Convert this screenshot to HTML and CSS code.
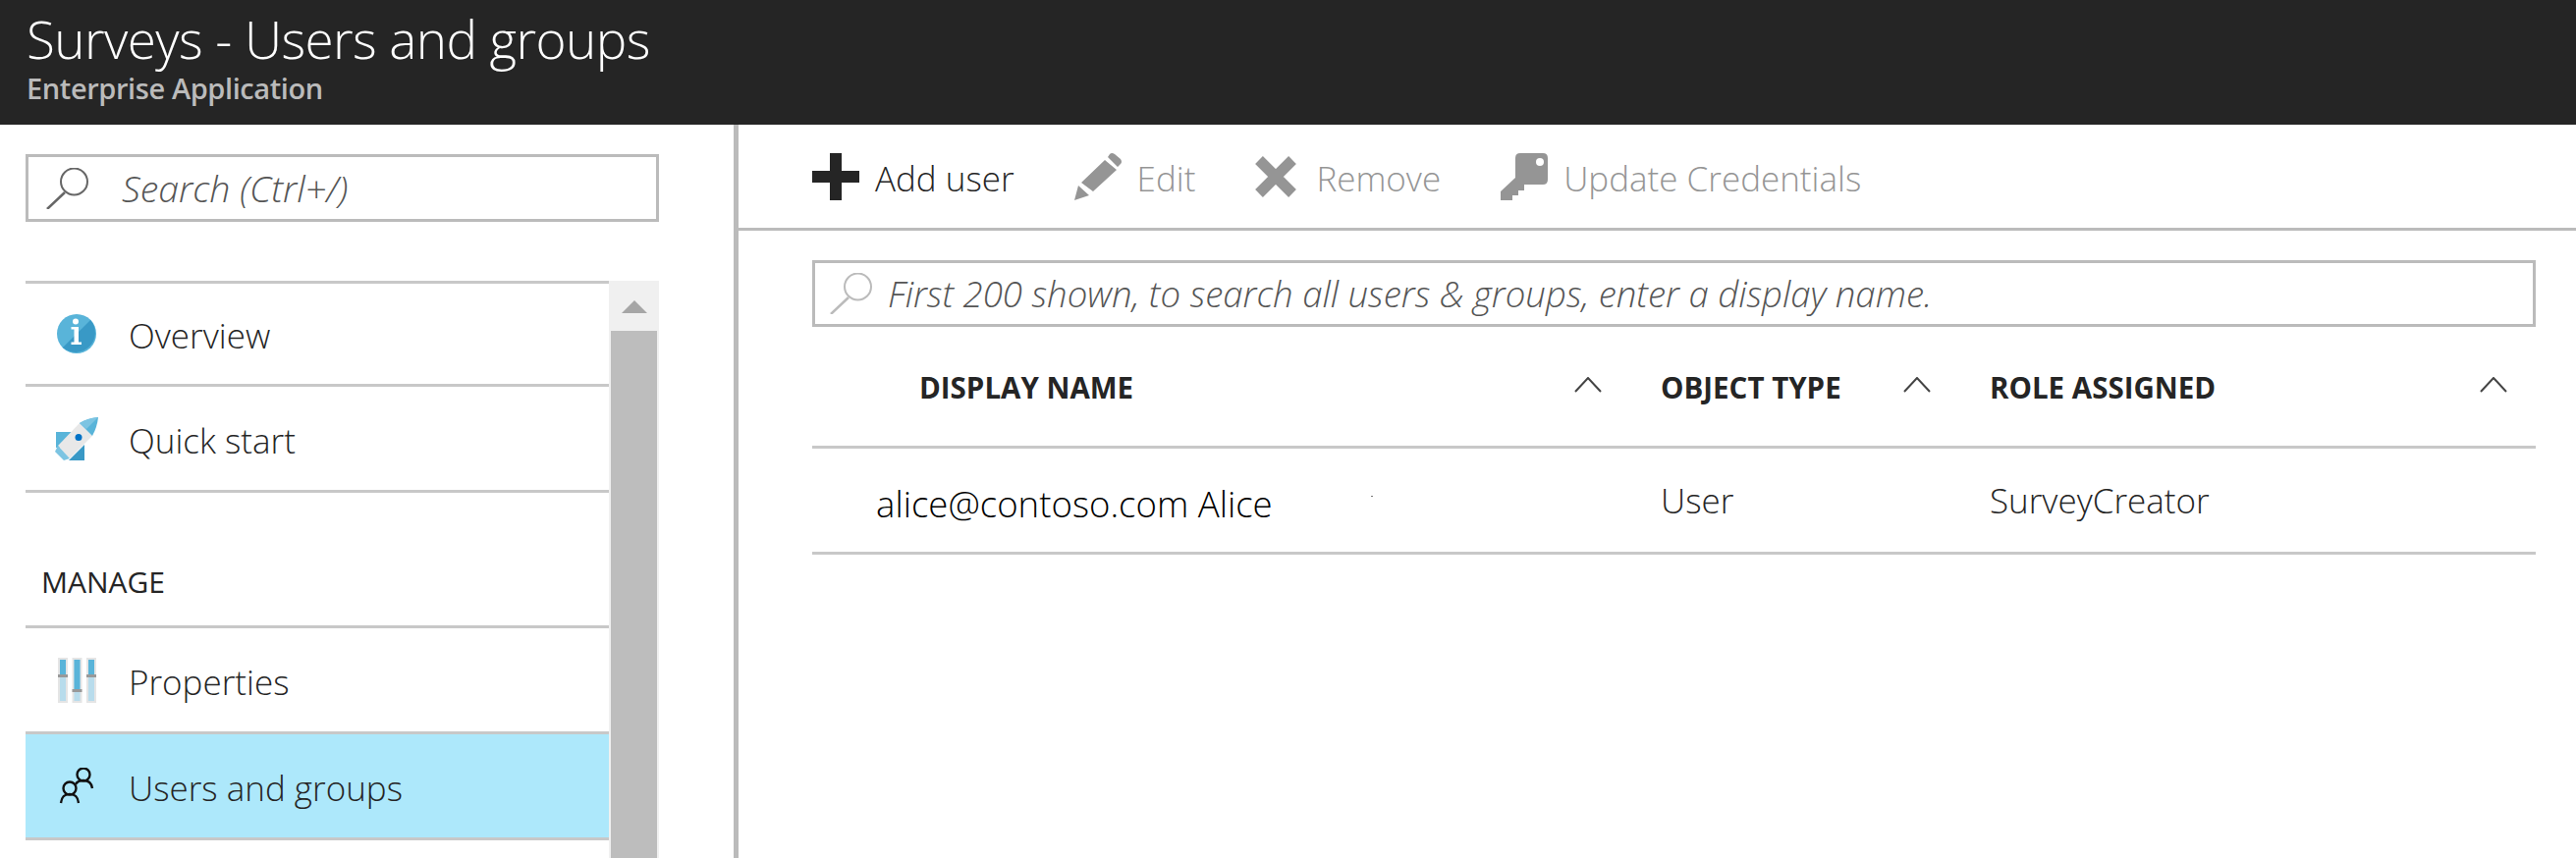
FILE: index.html
```html
<!DOCTYPE html>
<html lang="en">
<head>
  <meta charset="UTF-8" />
  <title>Surveys - Users and groups</title>
  <link rel="stylesheet" href="styles.css">
</head>
<body>

  <header class="blade-header">
    <h1>Surveys - Users and groups</h1>
    <p>Enterprise Application</p>
  </header>

  <div class="blade">
    <aside class="sidebar">
      <div class="side-search">
        <svg class="side-search-icon" width="43" height="42" viewBox="0 0 43 42"><circle cx="28.500" cy="14" r="13.500" fill="none" stroke="#666" stroke-width="2"/><path d="M19 25 L1 42" fill="none" stroke="#666" stroke-width="2.500"/></svg>
        <span>Search (Ctrl+/)</span>
      </div>

      <div class="side-body">
        <nav class="menu">
          <a class="menu-item">
            <svg class="menu-icon" width="44" height="44" viewBox="0 0 44 44"><circle cx="22" cy="22" r="20" fill="#59b4d9"/><path d="M36.100 7.900 A20 20 0 0 1 7.900 36.100 Z" fill="#3999c6"/><circle cx="21" cy="9.500" r="3" fill="#fff"/><path d="M16.500 15 H24 V30.500 H27 V33 H16.500 V30.500 H19.500 V17.500 H16.500 Z" fill="#fff"/></svg>
            <span>Overview</span>
          </a>
          <a class="menu-item">
            <svg class="menu-icon" width="44" height="44" viewBox="0 0 44 44"><path d="M1 15 H20 L16 30 L1 31 Z" fill="#59b4d9"/><path d="M30 28 V44 H14 Z" fill="#3999c6"/><path d="M25 6 L38 19 L15 42 L3 29 Z" fill="#e8e8e8"/><path d="M25 6 Q33 1 44 0 Q43 10 38 19 Z" fill="#59b4d9"/><path d="M25 6 Q33 1 44 0 L32 12 Z" fill="#7cc4e2"/><path d="M3 29 L0 35 L9 44 L15 42 Z" fill="#7cc4e2"/><circle cx="24" cy="20.500" r="3.500" fill="#0072c6"/></svg>
            <span>Quick start</span>
          </a>
          <div class="menu-heading">MANAGE</div>
          <a class="menu-item">
            <svg class="menu-icon" width="44" height="46" viewBox="0 0 44 46"><g fill="#e5e5e5"><rect x="3" y="0" width="10" height="46"/><rect x="17.500" y="0" width="10" height="46"/><rect x="32" y="0" width="10" height="46"/></g><g fill="#b8dcec"><rect x="5" y="2" width="6" height="42"/><rect x="19.500" y="2" width="6" height="42"/><rect x="34" y="2" width="6" height="42"/></g><g fill="#59b4d9"><rect x="5" y="2" width="6" height="15"/><rect x="19.500" y="2" width="6" height="30"/><rect x="34" y="2" width="6" height="15"/></g><g fill="#999"><rect x="3" y="17" width="10" height="3"/><rect x="17.500" y="32" width="10" height="3"/><rect x="32" y="17" width="10" height="3"/></g></svg>
            <span>Properties</span>
          </a>
          <a class="menu-item active">
            <svg class="menu-icon" width="44" height="38" viewBox="0 0 44 38"><g fill="none" stroke="#111" stroke-width="2.400"><circle cx="15" cy="21" r="6.500"/><path d="M6 36 C7 28 11 27 15 27 C19 27 23 28 24 36"/><circle cx="29" cy="7" r="6.500"/><path d="M21 17 C23 13 26 13 29 13 C33 13 37 14 38 21"/></g></svg>
            <span>Users and groups</span>
          </a>
        </nav>
        <div class="scrollbar">
          <div class="scroll-up"><span class="scroll-arrow"></span></div>
          <div class="scroll-thumb"></div>
        </div>
      </div>
    </aside>

    <main class="content">
      <div class="toolbar">
        <a class="tool">
          <svg width="48" height="48" viewBox="0 0 48 48"><path d="M18 0 H30 V18 H48 V30 H30 V48 H18 V30 H0 V18 H18 Z" fill="#252525"/></svg>
          <span>Add user</span>
        </a>
        <a class="tool disabled">
          <svg width="48" height="48" viewBox="0 0 48 48"><path d="M0 48 L4 33 L15 43 Z M7 30 L31 7 L43 17 L19 39 Z M34 4 L36 1 Q38 -1 41 1 L47 6 Q49 9 47 11 L44 14 Z" fill="#959595"/></svg>
          <span>Edit</span>
        </a>
        <a class="tool tool-remove disabled">
          <svg width="42" height="42" viewBox="0 0 42 42"><path d="M4 4 L38 38 M38 4 L4 38" fill="none" stroke="#959595" stroke-width="11"/></svg>
          <span>Remove</span>
        </a>
        <a class="tool disabled">
          <svg width="48" height="48" viewBox="0 0 48 48"><path d="M20 0 H43 Q48 0 48 5 V27 Q48 32 43 32 H24 V38 H18 V43 H12 V48 H0 V39 L15 25 V5 Q15 0 20 0 Z" fill="#959595"/><circle cx="40" cy="9" r="4" fill="#fff"/></svg>
          <span>Update Credentials</span>
        </a>
      </div>

      <div class="filter">
        <svg width="43" height="42" viewBox="0 0 43 42"><circle cx="28.500" cy="14" r="13.500" fill="none" stroke="#bbb" stroke-width="2"/><path d="M19 25 L1 42" fill="none" stroke="#bbb" stroke-width="2.500"/></svg>
        <span>First 200 shown, to search all users &amp; groups, enter a display name.</span>
      </div>

      <table class="users">
        <thead>
          <tr>
            <th class="col-name"><div class="th-inner"><span>DISPLAY NAME</span><svg class="sort" width="28" height="16" viewBox="0 0 28 16"><path d="M1 15 L14 1 L27 15" fill="none" stroke="#444" stroke-width="2"/></svg></div></th>
            <th class="col-type"><div class="th-inner"><span>OBJECT TYPE</span><svg class="sort" width="28" height="16" viewBox="0 0 28 16"><path d="M1 15 L14 1 L27 15" fill="none" stroke="#444" stroke-width="2"/></svg></div></th>
            <th class="col-role"><div class="th-inner"><span>ROLE ASSIGNED</span><svg class="sort" width="28" height="16" viewBox="0 0 28 16"><path d="M1 15 L14 1 L27 15" fill="none" stroke="#444" stroke-width="2"/></svg></div></th>
          </tr>
        </thead>
        <tbody>
          <tr>
            <td class="cell-user">alice@contoso.com Alice<span class="speck"></span></td>
            <td>User</td>
            <td>SurveyCreator</td>
          </tr>
        </tbody>
      </table>
    </main>
  </div>

</body>
</html>
```

FILE: styles.css
```css
html, body {
  height: 100%;
}
body {
  margin: 0;
  overflow: hidden;
  font-family: "Open Sans", "Noto Sans", sans-serif;
  background: #fff;
  color: #252525;
  display: flex;
  flex-direction: column;
}

.blade-header {
  height: 127px;
  flex: none;
  box-sizing: border-box;
  padding: 8px 27px 0;
  background: #252525;
  overflow: hidden;
}
.blade-header h1 {
  margin: 0;
  font-size: 53px;
  line-height: 64px;
  font-weight: 300;
  letter-spacing: -0.6px;
  color: #fff;
}
.blade-header p {
  margin: 0;
  font-size: 29px;
  line-height: 36px;
  font-weight: 600;
  letter-spacing: -0.4px;
  color: #bbb;
}

.blade {
  flex: 1;
  display: flex;
  min-height: 0;
}

.sidebar {
  width: 747px;
  flex: none;
  box-sizing: border-box;
  padding: 30px 76px 0 26px;
  display: flex;
  flex-direction: column;
}
.side-search {
  height: 69px;
  flex: none;
  box-sizing: border-box;
  border: 3px solid #bbb;
  display: flex;
  align-items: center;
  padding-left: 18px;
  font-size: 37.500px;
  font-style: italic;
  font-weight: 300;
  color: #555;
}
.side-search span {
  margin-left: 34px;
}

.side-body {
  flex: 1;
  margin-top: 60px;
  display: flex;
  min-height: 0;
}
.menu {
  flex: 1;
  border-top: 3px solid #c8c8c8;
}
.menu-item {
  height: 105px;
  box-sizing: content-box;
  display: flex;
  align-items: center;
  border-bottom: 3px solid #c8c8c8;
  font-size: 35px;
  font-weight: 300;
  color: #252525;
}
.menu-item:first-child {
  height: 102px;
}
.menu-icon {
  width: 44px;
  margin-left: 30px;
  margin-right: 31px;
  flex: none;
}
.menu-item span {
  padding-top: 4px;
}
.menu-item:first-child span {
  padding-top: 2px;
}
.menu-item.active {
  background: #ade8fb;
}
.menu-heading {
  height: 138px;
  box-sizing: border-box;
  padding: 73px 0 0 16px;
  border-bottom: 3px solid #c8c8c8;
  font-size: 30px;
  line-height: 36px;
  color: #252525;
}

.scrollbar {
  width: 51px;
  flex: none;
  display: flex;
  flex-direction: column;
  background: #f0f0f0;
}
.scroll-up {
  height: 51px;
  flex: none;
  display: flex;
  justify-content: center;
  padding-top: 20px;
  box-sizing: border-box;
}
.scroll-arrow {
  width: 0;
  height: 0;
  border-left: 13px solid transparent;
  border-right: 13px solid transparent;
  border-bottom: 13px solid #a6a6a6;
}
.scroll-thumb {
  flex: 1;
  margin: 0 2px;
  background: #bdbdbd;
}

.content {
  flex: 1;
  min-width: 0;
  border-left: 5px solid #bbb;
  box-sizing: border-box;
}

.toolbar {
  height: 105px;
  box-sizing: content-box;
  border-bottom: 3px solid #bbb;
  padding-left: 75px;
  display: flex;
  align-items: center;
  gap: 61px;
}
.tool {
  display: flex;
  align-items: center;
  gap: 16px;
  font-size: 35px;
  font-weight: 300;
  color: #252525;
}
.tool-remove {
  gap: 20px;
}
.tool span {
  padding-top: 4px;
}
.tool.disabled {
  color: #959595;
}

.filter {
  height: 68px;
  box-sizing: border-box;
  margin: 30px 41px 0 75px;
  border: 3px solid #bbb;
  display: flex;
  align-items: center;
  padding-left: 15px;
  gap: 16px;
  font-size: 36.600px;
  font-style: italic;
  font-weight: 300;
  color: #555;
}

.users {
  width: 1755px;
  margin-left: 75px;
  border-collapse: collapse;
  table-layout: fixed;
}
.users th {
  height: 121px;
  padding: 0;
  text-align: left;
  font-size: 29.500px;
  font-weight: 700;
  color: #252525;
  border-bottom: 3px solid #c8c8c8;
}
.col-name {
  width: 864px;
}
.col-type {
  width: 335px;
}
.th-inner {
  display: flex;
  justify-content: space-between;
  align-items: center;
  padding-right: 60px;
}
.th-inner span {
  padding-top: 2px;
}
.col-name .th-inner {
  padding-left: 109px;
}
.col-role .th-inner {
  padding-right: 29px;
}
.sort {
  margin-top: -4px;
}
.users td {
  height: 105px;
  padding: 0;
  font-size: 35px;
  font-weight: 300;
  color: #252525;
  border-bottom: 3px solid #c8c8c8;
}
.users td.cell-user {
  padding: 6px 0 0 65px;
  box-sizing: border-box;
  font-size: 36.600px;
  color: #000;
}
.speck {
  display: inline-block;
  width: 2px;
  height: 1px;
  margin-left: 100px;
  vertical-align: 21px;
  background: #777;
}
```
